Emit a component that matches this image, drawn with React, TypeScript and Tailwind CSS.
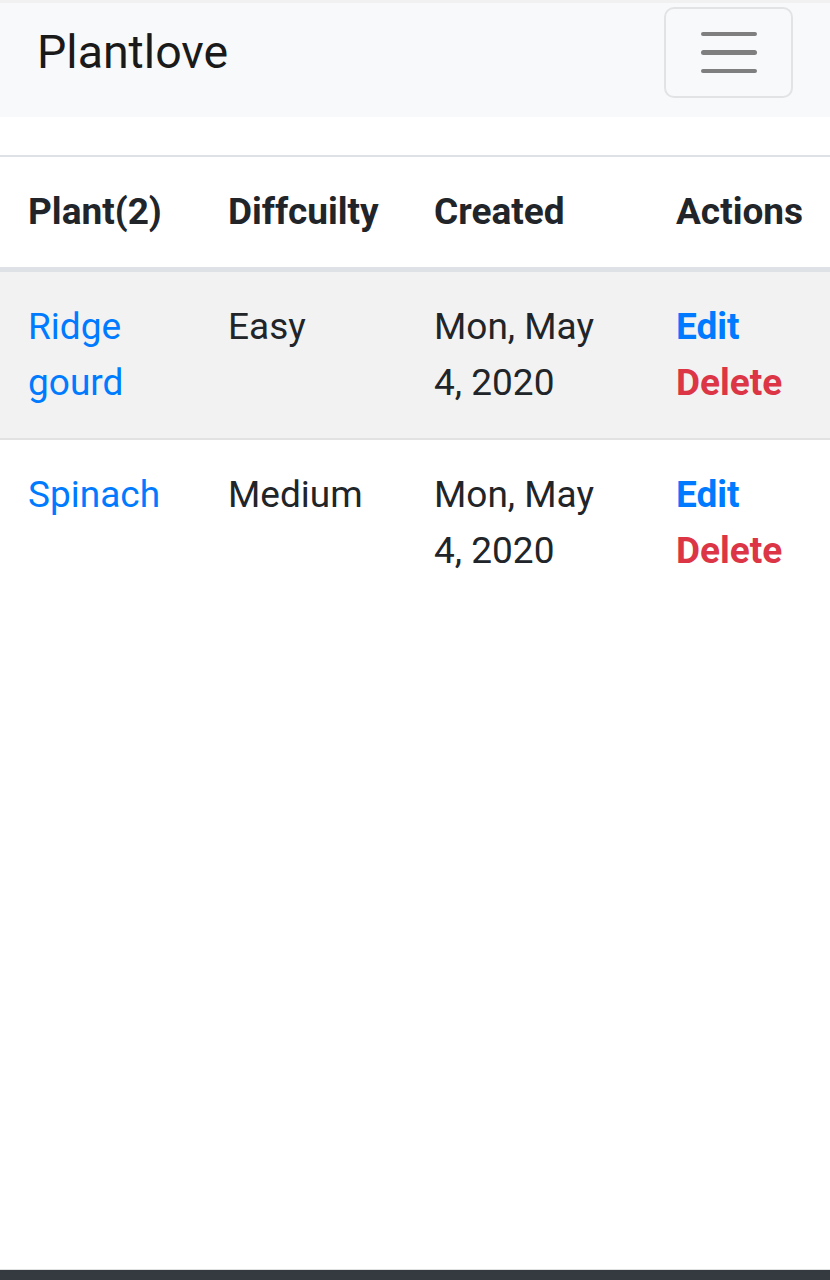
import React from "react";

const rows = [
  { name: ["Ridge", "gourd"], diff: "Easy", created: ["Mon, May", "4, 2020"] },
  { name: ["Spinach"], diff: "Medium", created: ["Mon, May", "4, 2020"] },
];

export default function App() {
  return (
    <div
      className="flex min-h-[1280px] w-[830px] flex-col bg-white text-[#212529]"
      style={{ fontFamily: "Roboto, 'Noto Sans', sans-serif" }}
    >
      <div className="h-[3px] bg-[#f1f1f1]" />
      <nav className="flex h-[114px] items-start justify-between bg-[#f8f9fa] pt-[4px] pl-[37px] pr-[37px]">
        <div className="flex h-[91px] items-center text-[46.5px] leading-none text-[#1a1a1a]">
          Plantlove
        </div>
        <button className="flex h-[91px] w-[129px] flex-col items-center justify-center gap-[14px] rounded-[10px] border-2 border-[#e2e3e4]">
          <span className="block h-[4.5px] w-[56px] rounded-full bg-[#7f7f7f]" />
          <span className="block h-[4.5px] w-[56px] rounded-full bg-[#7f7f7f]" />
          <span className="block h-[4.5px] w-[56px] rounded-full bg-[#7f7f7f]" />
        </button>
      </nav>
      <div className="mt-[38px]">
        <table className="w-[830px] table-fixed border-collapse text-left text-[37px] leading-[56px]">
          <colgroup>
            <col className="w-[200px]" />
            <col className="w-[206px]" />
            <col className="w-[242px]" />
            <col className="w-[182px]" />
          </colgroup>
          <thead>
            <tr className="border-t-2 border-b-[5px] border-[#dee2e6]">
              {["Plant(2)", "Diffcuilty", "Created", "Actions"].map((h) => (
                <th key={h} className="overflow-visible whitespace-nowrap px-[28px] pt-[27px] pb-[27px] align-top font-bold">
                  {h}
                </th>
              ))}
            </tr>
          </thead>
          <tbody>
            {rows.map((r, i) => (
              <tr
                key={i}
                className={i === 0 ? "border-b-[2.5px] border-[#e2e2e2] bg-[#f2f2f2]" : ""}
              >
                <td className="px-[28px] py-[27px] align-top text-[#007bff]">
                  {r.name.map((n) => (
                    <div key={n}>{n}</div>
                  ))}
                </td>
                <td className="px-[28px] py-[27px] align-top">{r.diff}</td>
                <td className="px-[28px] py-[27px] align-top">
                  {r.created.map((n) => (
                    <div key={n} className="whitespace-nowrap">{n}</div>
                  ))}
                </td>
                <td className="px-[28px] py-[27px] align-top font-bold">
                  <div className="text-[#007bff]">Edit</div>
                  <div className="text-[#dc3545]">Delete</div>
                </td>
              </tr>
            ))}
          </tbody>
        </table>
      </div>
      <div className="flex-1" />
      <div className="h-[1px] bg-[#e0e0e0]" />
      <div className="h-[10px] bg-[#343a40]" />
    </div>
  );
}
